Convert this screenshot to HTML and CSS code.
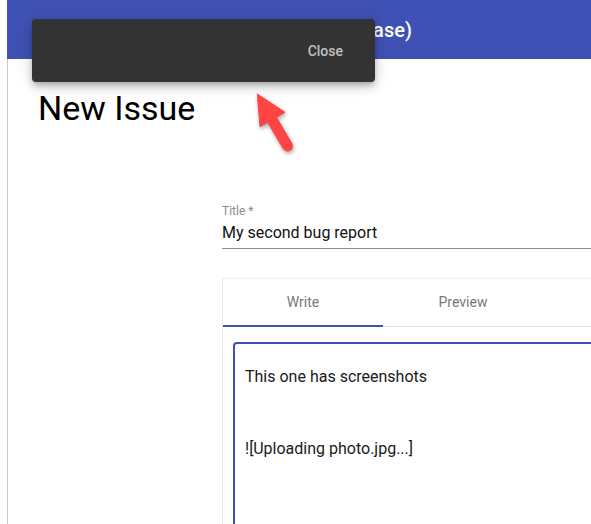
FILE: index.html
```html
<!DOCTYPE html>
<html lang="en">
<head>
<meta charset="utf-8">
<title>New Issue</title>
<link rel="stylesheet" href="styles.css">
</head>
<body>
<div class="page">
  <header class="appbar">
    <span class="appbar-title">Issue Tracker (Release)</span>
  </header>
  <main class="main">
    <h1 class="heading">New Issue</h1>
    <form class="issue-form">
      <div class="field">
        <label class="field-label">Title *</label>
        <div class="field-input">My second bug report</div>
      </div>
      <section class="editor">
        <div class="tabs">
          <div class="tab tab-active">Write</div>
          <div class="tab">Preview</div>
        </div>
        <div class="editor-body">
          <div class="textbox">This one has screenshots


![Uploading photo.jpg...]</div>
        </div>
      </section>
    </form>
  </main>
</div>

<div class="snackbar">
  <button class="snackbar-action" type="button">Close</button>
</div>

<svg class="pointer-arrow" width="52" height="72" viewBox="0 0 52 72" aria-hidden="true">
  <g fill="#ff4444" stroke="#ff4444">
    <path d="M7.3 6 L35 24.3 L10 38.7 Z" stroke-width="1" stroke-linejoin="round"/>
    <line x1="21" y1="30" x2="37.5" y2="58" stroke-width="11" stroke-linecap="round"/>
  </g>
</svg>
</body>
</html>
```

FILE: styles.css
```css
html, body {
  margin: 0;
  padding: 0;
  height: 100%;
  overflow: hidden;
  background: #fff;
}

body {
  font-family: Roboto, "Liberation Sans", Arial, sans-serif;
  color: #000;
}

.page {
  display: flex;
  flex-direction: column;
  height: 100%;
  margin-left: 7px;
}

.appbar {
  flex: 0 0 59px;
  background: #3f51b5;
  display: flex;
  align-items: center;
  justify-content: center;
  color: #fff;
}

.appbar-title {
  font-size: 20px;
  font-weight: 500;
  padding-left: 16px;
}

.main {
  flex: 1;
  border-left: 1px solid #c8c8c8;
  overflow: hidden;
}

.heading {
  margin: 29px 0 0 30px;
  font-size: 34px;
  line-height: 40px;
  font-weight: 400;
  color: #000;
}

.issue-form {
  margin: 75px 0 0 214px;
  width: 440px;
}

.field-label {
  display: block;
  font-size: 12px;
  line-height: 16px;
  color: #8a8a8a;
}

.field-input {
  margin-top: 4px;
  font-size: 16px;
  line-height: 20px;
  padding-bottom: 5px;
  border-bottom: 1px solid #8c8c8c;
  color: #111;
}

.editor {
  margin-top: 29px;
  border-top: 1px solid #efefef;
  border-left: 1px solid #ececec;
}

.tabs {
  display: flex;
  border-bottom: 1px solid #e0e0e0;
  height: 47px;
}

.tab {
  width: 160px;
  height: 46px;
  line-height: 47px;
  text-align: center;
  font-size: 14px;
  color: #787878;
  border-bottom: 2px solid transparent;
}

.tab-active {
  border-bottom-color: #3f51b5;
}

.editor-body {
  padding: 15px 0 0 10px;
}

.textbox {
  height: 300px;
  border: 2px solid #3f51b5;
  border-radius: 4px;
  padding: 21px 10px 0 10px;
  font-size: 16px;
  line-height: 24px;
  white-space: pre-line;
  color: #1a1a1a;
}

.snackbar {
  position: absolute;
  left: 32px;
  top: 19px;
  width: 343px;
  height: 63px;
  box-sizing: border-box;
  background: #333333;
  border-radius: 4px;
  display: flex;
  align-items: center;
  justify-content: flex-end;
  padding-right: 24px;
  box-shadow: 0 3px 5px -1px rgba(0,0,0,.2), 0 6px 10px 0 rgba(0,0,0,.14), 0 1px 18px 0 rgba(0,0,0,.12);
}

.snackbar-action {
  background: none;
  border: 0;
  padding: 6px 8px;
  font-family: Roboto, "Liberation Sans", Arial, sans-serif;
  font-size: 14px;
  font-weight: 500;
  color: rgba(255,255,255,.7);
}

.pointer-arrow {
  position: absolute;
  left: 250px;
  top: 88px;
  filter: drop-shadow(1px 2px 2px rgba(0,0,0,.35));
}
```
